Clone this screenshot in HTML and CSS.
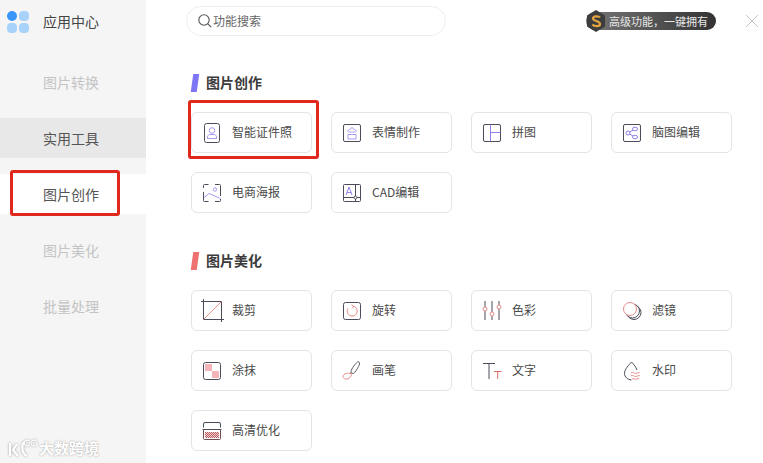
FILE: index.html
```html
<!DOCTYPE html>
<html lang="zh">
<head>
<meta charset="utf-8">
<title>应用中心</title>
<link rel="stylesheet" href="styles.css">
</head>
<body>
<div class="app">
  <aside class="sidebar">
    <div class="brand">
      <div class="brand-logo"><i class="dot dot-main"></i><i class="dot"></i><i class="dot"></i><i class="dot"></i></div>
      <span>应用中心</span>
    </div>
    <nav class="nav">
      <a class="nav-item">图片转换</a>
      <a class="nav-item nav-hover">实用工具</a>
      <a class="nav-item nav-active">图片创作</a>
      <a class="nav-item">图片美化</a>
      <a class="nav-item">批量处理</a>
    </nav>
    <div class="watermark">
      <svg width="30" height="20" viewBox="0 0 30 20" fill="none" stroke="#fff" stroke-width="2.200"><path d="M2 5v13M9 6l-4 6 5 6M16 4c-3 4-2 12 3 14"/><circle cx="19" cy="5" r="3" stroke-width="1"/><circle cx="26" cy="5" r="3" stroke-width="1"/></svg>
      <span>大数跨境</span>
    </div>
  </aside>
  <main class="main">
    <header class="topbar">
      <div class="search">
        <svg width="16" height="16" viewBox="0 0 16 16" fill="none" stroke="#555" stroke-width="1.100"><circle cx="7" cy="7" r="5.200"/><path d="M10.800 10.800l3.400 3.400"/></svg>
        <span>功能搜索</span>
      </div>
      <div class="promo">
        <svg class="promo-hex" width="20" height="22" viewBox="0 0 20 22"><path d="M10 0l9 5.500v11L10 22l-9-5.500v-11z" fill="#3d3d3d"/><path d="M14 7.500c-1-1.500-7-2-7 1 0 3 7 2 7 5.500 0 3-6 2.500-7.500 .5" fill="none" stroke="#e5a53f" stroke-width="2.200"/></svg>
        <span>高级功能，一键拥有</span>
      </div>
      <svg class="close" width="14" height="14" viewBox="0 0 14 14" stroke="#c4c4c4" stroke-width="1"><path d="M1 1l12 12M13 1L1 13"/></svg>
    </header>

    <section class="group">
      <h2 class="group-title"><i class="mark mark-purple"></i><span>图片创作</span></h2>
      <div class="tools">
        <a class="tool"><svg width="20" height="20" viewBox="0 0 20 20" fill="none"><rect x="2.500" y=".5" width="15" height="19" rx="2" stroke="#4b4b5a"/><circle cx="10" cy="7.500" r="2.800" stroke="#a79bf0"/><path d="M5.500 15.500v-1.500c0-1.500 1.500-2.500 2.500-2.500h4c1 0 2.500 1 2.500 2.500v1.500z" stroke="#a79bf0"/></svg><span>智能证件照</span></a>
        <a class="tool"><svg width="20" height="20" viewBox="0 0 20 20" fill="none"><rect x="1.500" y="1.500" width="17" height="17" rx="1.500" stroke="#4b4b5a"/><path d="M5 8.500L10 4.500l5 4M6.500 9h7M6 11.500h8v4.500H6z" stroke="#a79bf0"/></svg><span>表情制作</span></a>
        <a class="tool"><svg width="20" height="20" viewBox="0 0 20 20" fill="none"><rect x="1.500" y="1.500" width="17" height="17" rx="1.500" stroke="#4b4b5a"/><path d="M8.500 1.500v17M8.500 9.500h10" stroke="#8f80e8"/></svg><span>拼图</span></a>
        <a class="tool"><svg width="20" height="20" viewBox="0 0 20 20" fill="none"><rect x="1.500" y="1.500" width="17" height="17" rx="1.500" stroke="#4b4b5a"/><circle cx="6" cy="10" r="2" stroke="#8f80e8"/><ellipse cx="13" cy="6" rx="2.500" ry="1.800" stroke="#8f80e8"/><ellipse cx="13" cy="14" rx="2.500" ry="1.800" stroke="#8f80e8"/><path d="M7.700 9l3.300-2M7.700 11l3.300 2" stroke="#8f80e8"/></svg><span>脑图编辑</span></a>
        <a class="tool"><svg width="20" height="20" viewBox="0 0 20 20" fill="none"><path d="M1.500 5V2.500a1 1 0 011-1h4M13 1.500h4.500a1 1 0 011 1V13M1.500 9v8.500a1 1 0 001 1h4M13 18.500h4.500a1 1 0 001-1V16" stroke="#4b4b5a"/><circle cx="13" cy="6.500" r="1.700" stroke="#a79bf0"/><path d="M1.500 15L7 10.500l11.500 5" stroke="#a79bf0"/></svg><span>电商海报</span></a>
        <a class="tool"><svg width="20" height="20" viewBox="0 0 20 20" fill="none"><rect x="1.500" y="1.500" width="17" height="17" rx="1" stroke="#4b4b5a"/><path d="M1.500 14.500h17M13.500 1.500v17" stroke="#4b4b5a"/><circle cx="13.500" cy="14.500" r="1.500" fill="#fff" stroke="#4b4b5a"/><path d="M4 12l3-8 3 8M5 9.500h4" stroke="#8f80e8"/></svg><span>CAD编辑</span></a>
      </div>
    </section>

    <section class="group group-next">
      <h2 class="group-title"><i class="mark mark-red"></i><span>图片美化</span></h2>
      <div class="tools">
        <a class="tool"><svg width="20" height="20" viewBox="0 0 20 20" fill="none"><path d="M-1 .5h20.500V21M1.500-2v20.500H22" stroke="#4b4b5a"/><path d="M1.500 18.500l18-18" stroke="#e88c8c"/></svg><span>裁剪</span></a>
        <a class="tool"><svg width="20" height="20" viewBox="0 0 20 20" fill="none"><rect x="1.500" y="1.500" width="17" height="17" rx="2" stroke="#4b4b5a"/><path d="M11.500 5.300a5 5 0 11-5.500 2.200M9.500 3.800l2.300 1.500-1.800 2" stroke="#e88c8c"/></svg><span>旋转</span></a>
        <a class="tool"><svg width="20" height="20" viewBox="0 0 20 20" fill="none"><path d="M3 0v6M3 10v9M10 0v11M10 15v4M17 0v4M17 8v11" stroke="#4b4b5a"/><circle cx="3" cy="8" r="2" stroke="#e88c8c"/><circle cx="10" cy="13" r="2" stroke="#e88c8c"/><circle cx="17" cy="6" r="2" stroke="#e88c8c"/></svg><span>色彩</span></a>
        <a class="tool"><svg width="20" height="20" viewBox="0 0 20 20" fill="none"><circle cx="12" cy="11.500" r="7" stroke="#4b4b5a"/><circle cx="10.500" cy="10" r="7" fill="#fff" stroke="#4b4b5a"/><circle cx="8" cy="8" r="6.500" fill="#fff" stroke="#e88c8c"/></svg><span>滤镜</span></a>
        <a class="tool"><svg width="20" height="20" viewBox="0 0 20 20" fill="none"><rect x="1.500" y="1.500" width="17" height="17" rx="2" stroke="#4b4b5a"/><path d="M3 3h7v7H3zM10 10h7v7h-7z" fill="#f5b5b8"/></svg><span>涂抹</span></a>
        <a class="tool"><svg width="20" height="20" viewBox="0 0 20 20" fill="none"><path d="M9 12c-.5-3 3-8 6.500-11 2.500-1 2.500 2 1 4.500-1.500 3-3.500 6-5 7z" stroke="#5a5a64"/><path d="M9 12.500c-2.500-.5-7.500-.5-8 3 0 3 5.500 4 8-.5.500-1 .5-2 0-2.500z" stroke="#e88c8c"/></svg><span>画笔</span></a>
        <a class="tool"><svg width="20" height="20" viewBox="0 0 20 20" fill="none"><path d="M1 2.500h12M7 2.500V18" stroke="#4b4b5a"/><path d="M12 10.500h7.500M15.700 10.500V18" stroke="#e06a6a"/></svg><span>文字</span></a>
        <a class="tool"><svg width="20" height="20" viewBox="0 0 20 20" fill="none"><path d="M9.500 1C7 4 2.500 8 2.500 12.500c0 3.500 3 6 7 6.500M9.500 1c2 2 4.500 5 5.500 8" stroke="#4b4b5a"/><path d="M9 12c2-1.500 3 .5 4.500 .5S16 11.500 17.500 11.500M9 15c2-1.500 3 .5 4.500 .5s2.500-1 4-1M10 18c1.500-1 2.500 .3 3.500 .3s2-.8 3.500-.8" stroke="#e88c8c"/></svg><span>水印</span></a>
        <a class="tool"><svg width="20" height="20" viewBox="0 0 20 20" fill="none"><defs><pattern id="check" width="2" height="2" patternUnits="userSpaceOnUse"><rect width="2" height="2" fill="#f3d3d3"/><rect width="1" height="1" fill="#b9575c"/><rect x="1" y="1" width="1" height="1" fill="#b9575c"/></pattern></defs><path d="M1.500 6.500V3a1.500 1.500 0 011.500-1.500h14A1.500 1.500 0 0118.500 3v3.500M.5 8.500h19" stroke="#4b4b5a"/><path d="M1.500 8.500v9a1 1 0 001 1h15a1 1 0 001-1v-9" stroke="#6b4a50"/><rect x="3" y="11" width="14" height="6" fill="url(#check)"/></svg><span>高清优化</span></a>
      </div>
    </section>
  </main>
  <div class="highlight highlight-nav"></div>
  <div class="highlight highlight-tool"></div>
</div>
</body>
</html>
```

FILE: styles.css
```css
* { box-sizing: border-box; }
html, body { margin: 0; height: 100%; background: #fff; overflow: hidden; }
body { font-family: "Noto Sans CJK SC", "Liberation Sans", sans-serif; color: #4a4a4a; }
.app { position: relative; display: flex; width: 763px; height: 463px; }

.sidebar { position: relative; flex: 0 0 146px; background: #f5f5f5; }
.brand { display: flex; align-items: center; gap: 14px; height: 44px; padding-left: 7px; font-size: 14px; line-height: 20px; color: #444; }
.brand span { margin-bottom: 2px; }
.brand-logo { display: grid; grid-template-columns: 10px 10px; gap: 2px; width: 22px; }
.dot { width: 10px; height: 10px; border-radius: 4px; background: #a9d2fb; }
.dot-main { border-radius: 50%; background: #3a96fb; }
.nav { display: flex; flex-direction: column; gap: 16px; margin-top: 18px; }
.nav-item { display: block; height: 40px; padding-left: 43px; font-size: 14px; line-height: 40px; color: #c4c4c4; }
.nav-hover { background: #e8e8e8; color: #555; }
.nav-active { background: #fff; color: #555; }
.watermark { position: absolute; left: 8px; top: 438px; display: flex; align-items: center; gap: 1px; font-size: 15px; line-height: 20px; font-weight: 700; color: #fff; text-shadow: 0 0 2px #999; }
.watermark svg { filter: drop-shadow(0 0 1px #999); }

.main { flex: 1; padding-left: 45px; }
.topbar { display: flex; align-items: center; height: 30px; margin: 6px 0 38px; }
.search { display: flex; align-items: center; width: 260px; height: 30px; margin-left: -5px; padding-left: 10px; border: 1px solid #eee; border-radius: 15px; font-size: 12px; color: #666; }
.search span { margin-bottom: 2px; }
.promo { display: flex; align-items: center; gap: 3px; width: 130px; height: 18px; margin-left: 140px; border-radius: 9px; background: linear-gradient(90deg, #777, #333); font-size: 11px; line-height: 18px; color: #e8e8e8; white-space: nowrap; }
.promo-hex { flex: none; }
.close { margin-left: 29px; }

.group-next { margin-top: 39px; }
.group-title { display: flex; align-items: center; gap: 8px; height: 18px; margin: 0 0 20px; font-size: 14px; line-height: 18px; font-weight: 700; color: #3c3c3c; }
.group-title span { margin-bottom: 2px; }
.mark { display: block; width: 6px; height: 18px; margin-left: 1px; transform: skewX(-8deg); }
.mark-purple { background: #7f76f5; }
.mark-red { background: #ee7070; }
.tools { display: grid; grid-template-columns: repeat(4, 121px); grid-auto-rows: 41px; gap: 19px; }
.tool { display: flex; align-items: center; gap: 10px; padding-left: 10px; border: 1px solid #e4e4e4; border-radius: 6px; background: #fff; font-size: 12px; color: #4a4a4a; }
.tool span { margin-bottom: 3px; }
.tool svg { flex: none; overflow: visible; }

.highlight { position: absolute; border: 3px solid #e0281c; border-radius: 3px; pointer-events: none; }
.highlight-nav { left: 10px; top: 170px; width: 110px; height: 46px; }
.highlight-tool { left: 188px; top: 100px; width: 131px; height: 59px; }
```
